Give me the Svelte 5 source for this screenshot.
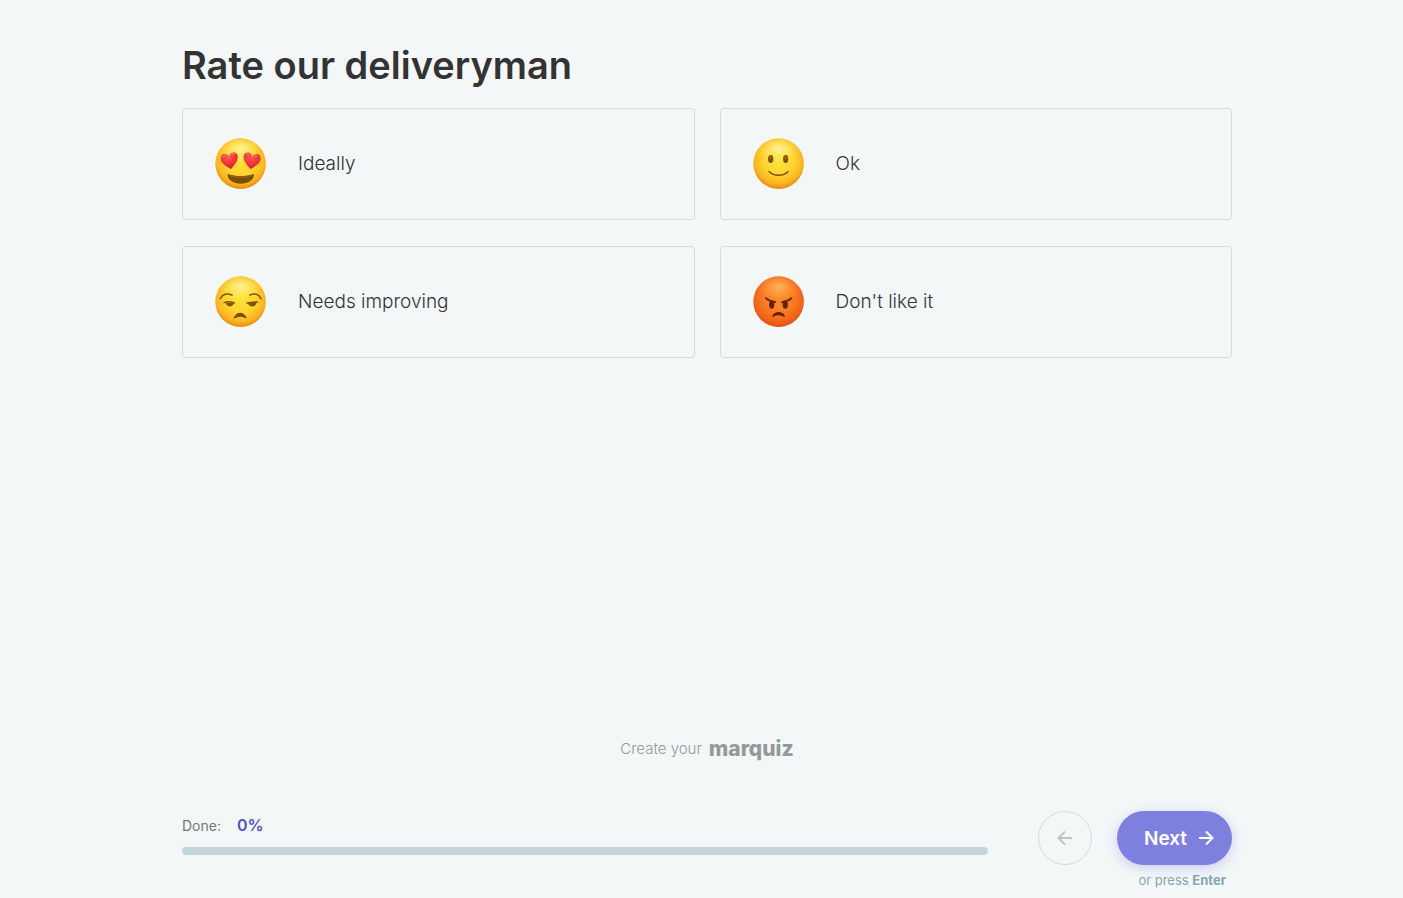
<script>
  const answers = [
    { id: 'love', text: 'Ideally' },
    { id: 'smile', text: 'Ok' },
    { id: 'unamused', text: 'Needs improving' },
    { id: 'angry', text: "Don't like it" }
  ];

  let selected = $state('');
  let progress = $state(0);
</script>

{#snippet face(kind)}
  <svg class="face" viewBox="0 0 52 52" aria-hidden="true">
    <defs>
      <radialGradient id="{kind}-skin" cx="0.5" cy="0.42" r="0.6">
        {#if kind === 'angry'}
          <stop offset="0" stop-color="#fb8c2c" />
          <stop offset="0.5" stop-color="#f97c22" />
          <stop offset="0.82" stop-color="#f26118" />
          <stop offset="1" stop-color="#dc4a12" />
        {:else}
          <stop offset="0" stop-color="#ffe338" />
          <stop offset="0.5" stop-color="#ffd52e" />
          <stop offset="0.8" stop-color="#fcb41e" />
          <stop offset="1" stop-color="#dc8410" />
        {/if}
      </radialGradient>
      <radialGradient id="{kind}-shine" cx="0.5" cy="0.35" r="0.5">
        <stop offset="0" stop-color={kind === 'angry' ? '#ffc46e' : '#fffac4'} stop-opacity="0.75" />
        <stop offset="1" stop-color={kind === 'angry' ? '#ffb050' : '#fff06a'} stop-opacity="0" />
      </radialGradient>
    </defs>
    <circle cx="25.6" cy="25.6" r="25.3" fill="url(#{kind}-skin)" />
    <ellipse cx="25.6" cy="15" rx="21" ry="14" fill="url(#{kind}-shine)" />

    {#if kind === 'love'}
      <defs>
        <radialGradient id="heart" cx="0.45" cy="0.3" r="0.75">
          <stop offset="0" stop-color="#ff5a52" />
          <stop offset="0.6" stop-color="#f12f38" />
          <stop offset="1" stop-color="#c91a2c" />
        </radialGradient>
      </defs>
      <path d="M12.7 36c8 2.8 18 2.8 26.2 0 .8 5-5 9.800-13.100 9.800S12 41 12.700 36z" fill="#765009" />
      <path d="M13.500 36.400c8 2.600 17 2.600 24.600 0-.6 2.200-5.400 3.400-12.300 3.400s-11.700-1.200-12.300-3.400z" fill="#8e620c" />
      <path d="M16 31C11 28.500 6.400 25.700 5.800 21.300c-.5-3.600 2.200-5.700 4.800-5.100 1.700.3 2.800 1.400 3.500 2.700.2-2.100 1.600-4.200 4-4.400 3.100-.3 5 2.200 4.600 5.200-.4 4.200-3.500 7.600-6.700 11.300z" fill="url(#heart)" />
      <path d="M35.400 31c5-2.500 9.600-5.300 10.200-9.700.5-3.600-2.200-5.700-4.800-5.100-1.700.3-2.800 1.400-3.500 2.700-.2-2.100-1.600-4.200-4-4.400-3.100-.3-5 2.200-4.600 5.200.4 4.200 3.500 7.600 6.700 11.300z" fill="url(#heart)" />
      <path d="M8 19c.4-1 1.400-1.500 2.500-1.300M16.800 16.300c.7-.6 1.600-.7 2.400-.3M31.400 16.600c.7-.6 1.600-.7 2.400-.3M39.800 18c1-.4 2-.2 2.700.4" fill="none" stroke="#ff938a" stroke-linecap="round" />
    {:else if kind === 'smile'}
      <ellipse cx="17.700" cy="21" rx="2.600" ry="4.100" fill="#79500b" />
      <ellipse cx="32.700" cy="21" rx="2.600" ry="4.100" fill="#79500b" />
      <ellipse cx="17.500" cy="19.500" rx="0.900" ry="1.300" fill="#a97818" />
      <ellipse cx="32.500" cy="19.500" rx="0.900" ry="1.300" fill="#a97818" />
      <path d="M16 33.500c5 5 14.200 5 19.200 0" fill="none" stroke="#79500b" stroke-width="1.500" stroke-linecap="round" />
    {:else if kind === 'unamused'}
      <g fill="none" stroke="#80540c" stroke-linecap="round" stroke-width="1.500">
        <path d="M5.200 22.600c2.300-4.600 7-6 11.800-3.400M34.800 19.200c4.800-2.600 9.200-1 11.200 3.600" />
        <path d="M9.200 26.600c3.200-1.500 7-.9 10.200.3M31.800 26.900c3.400-.1 7-1.300 10.500-.8" />
      </g>
      <path d="M10.800 26.500l8 .6c-.4 2.200-2 3.500-4.200 3.300-2-.2-3.600-1.600-3.800-3.900zM33 27.200l8.400-.9c0 2.300-1.400 4-3.600 4.200-2.300.2-4.200-1.100-4.800-3.300z" fill="#80540c" />
      <path d="M18.800 41.500c1.600-3 3.800-4.700 6.300-4.700s5 1.700 6.400 4.600c.3.800-.3 1.200-1 .8-3.600-2-7.200-2-10.700.1-.7.400-1.300 0-1-.8z" fill="#79500b" />
    {:else}
      <path d="M12.800 22.200c2.800 2.500 5.700 3.600 9.600 3.900M38.600 22.200c-2.800 2.500-5.700 3.600-9.600 3.900" fill="none" stroke="#602409" stroke-width="1.700" stroke-linecap="round" />
      <ellipse cx="18.700" cy="28.700" rx="2.600" ry="4.100" fill="#602409" />
      <ellipse cx="32.300" cy="28.700" rx="2.600" ry="4.100" fill="#602409" />
      <path d="M19.400 39.800c1.200-2.600 3.600-3.800 6.200-3.800s5 1.200 6.200 3.800c.3.900-.3 1.300-1 .9-3.500-1.900-6.900-1.900-10.400 0-.7.400-1.300 0-1-.9z" fill="#602409" />
    {/if}
  </svg>
{/snippet}

<main class="quiz">
  <h1>Rate our deliveryman</h1>

  <div class="answers" role="radiogroup" aria-label="Rate our deliveryman">
    {#each answers as answer (answer.id)}
      <label class="answer" class:active={selected === answer.id}>
        <input type="radio" name="answer" value={answer.id} bind:group={selected}>
        {@render face(answer.id)}
        <span>{answer.text}</span>
      </label>
    {/each}
  </div>

  <a class="brand" href="#marquiz">Create your <b>marquiz</b></a>

  <footer>
    <div class="progress">
      <div class="progress-label">Done: <b>{progress}%</b></div>
      <div class="progress-bar">
        <div class="progress-fill" style="width: {progress}%"></div>
      </div>
    </div>
    <button class="back" aria-label="Back">
      <svg class="arrow" viewBox="0 0 16 16"><path d="M15 8H1.500M8 1.500L1.500 8 8 14.500" /></svg>
    </button>
    <div class="forward">
      <button class="next">
        Next
        <svg class="arrow" viewBox="0 0 16 16"><path d="M1 8h13.500M8 1.500L14.500 8 8 14.500" /></svg>
      </button>
      <div class="hint">or press <b>Enter</b></div>
    </div>
  </footer>
</main>

<style>
  :global(body) {
    margin: 0;
    background: #f3f7f8;
  }

  .quiz {
    display: flex;
    flex-direction: column;
    box-sizing: border-box;
    min-height: 100vh;
    padding: 41px 171px 10px 182px;
    color: #333;
    font-family: Inter, "Liberation Sans", sans-serif;
  }

  h1 {
    margin: 0 0 19px;
    font-size: 38px;
    line-height: 48px;
    font-weight: 600;
  }

  .answers {
    display: grid;
    grid-template-columns: 1fr 1fr;
    gap: 26px 25px;
  }

  .answer {
    display: flex;
    align-items: center;
    gap: 31px;
    box-sizing: border-box;
    min-height: 112px;
    padding: 0 32px;
    border: 1px solid #d3dbdd;
    border-radius: 4px;
    font-size: 19px;
    line-height: 24px;
    font-weight: 300;
    cursor: pointer;
  }

  .answer.active {
    border-color: #7f7fe0;
  }

  .answer input {
    position: absolute;
    opacity: 0;
  }

  .face {
    flex: none;
    width: 52px;
    height: 52px;
  }

  .brand {
    display: flex;
    justify-content: center;
    align-items: center;
    gap: 7px;
    margin: auto 0 50px;
    color: #949999;
    font-size: 15px;
    line-height: 24px;
    font-weight: 300;
    text-decoration: none;
  }

  .brand b {
    font-size: 21px;
    font-weight: 800;
  }

  footer {
    display: flex;
    align-items: flex-start;
  }

  .progress {
    flex: 1;
    margin-right: 50px;
    padding-top: 4px;
  }

  .progress-label {
    display: flex;
    align-items: baseline;
    gap: 16px;
    margin-bottom: 11px;
    color: #737778;
    font-size: 14px;
    line-height: 20px;
  }

  .progress-label b {
    color: #5050cc;
    font-size: 16px;
    font-weight: 600;
  }

  .progress-bar {
    height: 8px;
    border-radius: 4px;
    background: #c5d6db;
    overflow: hidden;
  }

  .progress-fill {
    height: 100%;
    background: #7f7fe0;
  }

  button {
    display: flex;
    align-items: center;
    justify-content: center;
    box-sizing: border-box;
    height: 54px;
    padding: 0;
    font-family: inherit;
    cursor: pointer;
  }

  .back {
    width: 54px;
    margin-right: 25px;
    border: 1px solid #d6dadb;
    border-radius: 50%;
    background: transparent;
    color: #c2c5c6;
  }

  .next {
    gap: 11px;
    width: 115px;
    padding-left: 9px;
    border: 0;
    border-radius: 27px;
    background: #7f7fe0;
    box-shadow: 0 3px 12px rgba(127, 127, 224, 0.35);
    color: #fff;
    font-size: 19px;
    font-weight: 600;
  }

  .arrow {
    width: 16px;
    height: 16px;
    fill: none;
    stroke: currentColor;
    stroke-width: 2;
  }

  .hint {
    margin-top: 7px;
    padding-right: 6px;
    color: #86a6b0;
    font-size: 13px;
    line-height: 16px;
    text-align: right;
  }

  .hint b {
    font-weight: 700;
  }

  @media (max-width: 1000px) {
    .quiz {
      padding-left: 24px;
      padding-right: 24px;
    }
  }

  @media (max-width: 640px) {
    .answers {
      grid-template-columns: 1fr;
    }
  }
</style>
